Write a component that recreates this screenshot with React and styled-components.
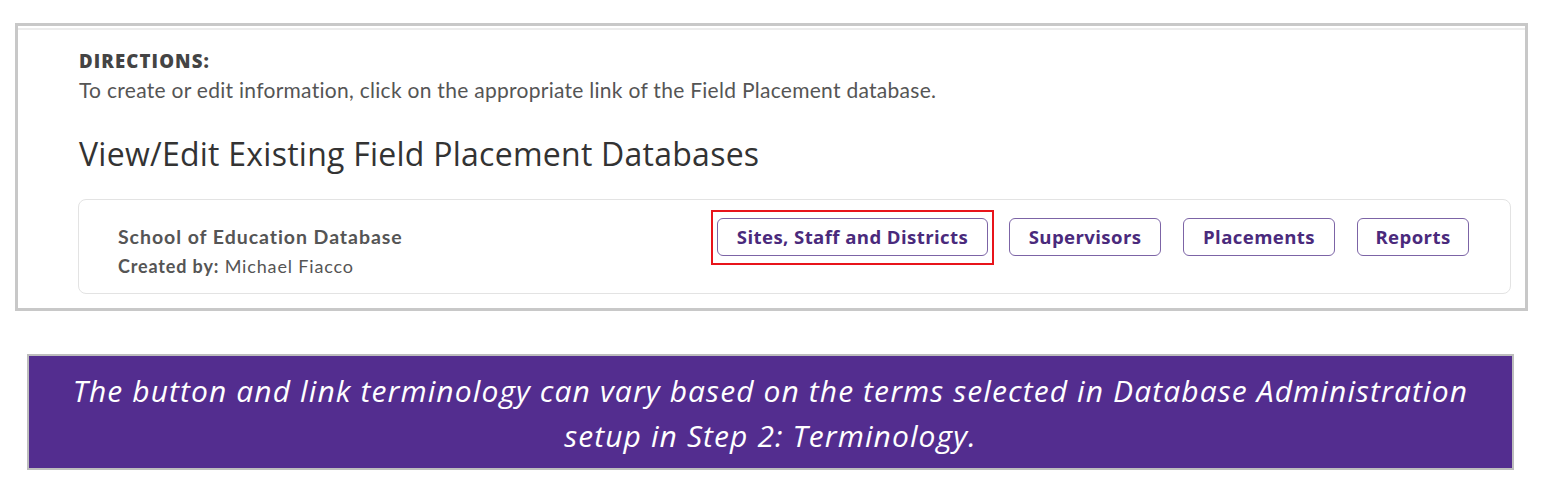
import React from "react";
import styled, { createGlobalStyle } from "styled-components";

const Global = createGlobalStyle`
  html, body { margin: 0; padding: 0; background: #ffffff; }
  body { font-family: Lato, "Open Sans", sans-serif; }
`;

const Page = styled.div`
  width: 1544px;
  height: 488px;
  box-sizing: border-box;
  padding: 23px 16px 0 15px;
  display: flex;
  flex-direction: column;
`;

const Panel = styled.section`
  width: 1513px;
  height: 288px;
  box-sizing: border-box;
  border: 3px solid #c8c8c8;
  background: #fff;
  padding-top: 2px;
`;

const PanelInner = styled.div`
  border-top: 2px solid #ececec;
  padding: 19px 14px 0 61px;
`;

const Label = styled.div`
  font-family: "Open Sans", Lato, sans-serif;
  font-weight: 800;
  font-size: 18.6px;
  color: #444;
  line-height: 24px;
  letter-spacing: 1.1px;
`;

const Directions = styled.p`
  margin: 4px 0 0;
  font-family: Lato, sans-serif;
  font-size: 21px;
  color: #555;
  line-height: 26px;
  letter-spacing: 0.28px;
`;

const Heading = styled.h2`
  margin: 31px 0 0;
  font-family: "Open Sans", sans-serif;
  font-weight: 400;
  font-size: 32px;
  color: #333;
  line-height: 40px;
  letter-spacing: 0.25px;
`;

const Card = styled.div`
  margin-top: 25px;
  margin-left: -1px;
  height: 95px;
  box-sizing: border-box;
  border: 1px solid #e3e3e3;
  border-radius: 8px;
  padding: 0 41px 0 39px;
  display: flex;
  align-items: flex-start;
  justify-content: space-between;
`;

const Info = styled.div`
  display: flex;
  flex-direction: column;
  gap: 5.6px;
  margin-top: 25.4px;
`;

const DbName = styled.div`
  font-family: Lato, sans-serif;
  font-weight: 700;
  font-size: 19.5px;
  color: #555;
  line-height: 24px;
  letter-spacing: 0.95px;
`;

const Creator = styled.div`
  font-family: Lato, sans-serif;
  font-size: 18px;
  color: #555;
  line-height: 22px;
  letter-spacing: 0.85px;
  b { font-weight: 700; }
`;

const Actions = styled.div`
  display: flex;
  align-items: flex-start;
  gap: 22px;
  margin-top: 17.7px;
`;

const Highlight = styled.div`
  border: 2px solid #e8141b;
  padding: 6px 4px 7px 4px;
  margin: -8px -7px -9px -6px;
  display: flex;
`;

const Button = styled.button`
  height: 38px;
  box-sizing: border-box;
  padding: 0;
  width: ${(p) => p.$w}px;
  border: 1.5px solid #7c64a6;
  border-radius: 6px;
  background: #fff;
  color: #4a2a7c;
  font-family: "Open Sans", sans-serif;
  font-weight: 700;
  font-size: 18.6px;
  letter-spacing: 0.4px;
  cursor: pointer;
`;

const Note = styled.div`
  margin: 43px 0 0 12px;
  width: 1487px;
  height: 116px;
  box-sizing: border-box;
  border: 2px solid #bdbdbd;
  background: #532d8f;
  color: #fff;
  font-family: "Open Sans", sans-serif;
  font-style: italic;
  font-size: 30px;
  line-height: 45px;
  letter-spacing: 1.1px;
  text-align: center;
  padding-top: 12px;
`;

export default function App() {
  return (
    <>
      <Global />
      <Page>
        <Panel>
          <PanelInner>
            <Label>DIRECTIONS:</Label>
            <Directions>
              To create or edit information, click on the appropriate link of the Field Placement database.
            </Directions>
            <Heading>View/Edit Existing Field Placement Databases</Heading>
            <Card>
              <Info>
                <DbName>School of Education Database</DbName>
                <Creator>
                  <b>Created by:</b> Michael Fiacco
                </Creator>
              </Info>
              <Actions>
                <Highlight>
                  <Button $w={271}>Sites, Staff and Districts</Button>
                </Highlight>
                <Button $w={152}>Supervisors</Button>
                <Button $w={152}>Placements</Button>
                <Button $w={112}>Reports</Button>
              </Actions>
            </Card>
          </PanelInner>
        </Panel>
        <Note>
          The button and link terminology can vary based on the terms selected in Database Administration
          <br />
          setup in Step 2: Terminology.
        </Note>
      </Page>
    </>
  );
}
